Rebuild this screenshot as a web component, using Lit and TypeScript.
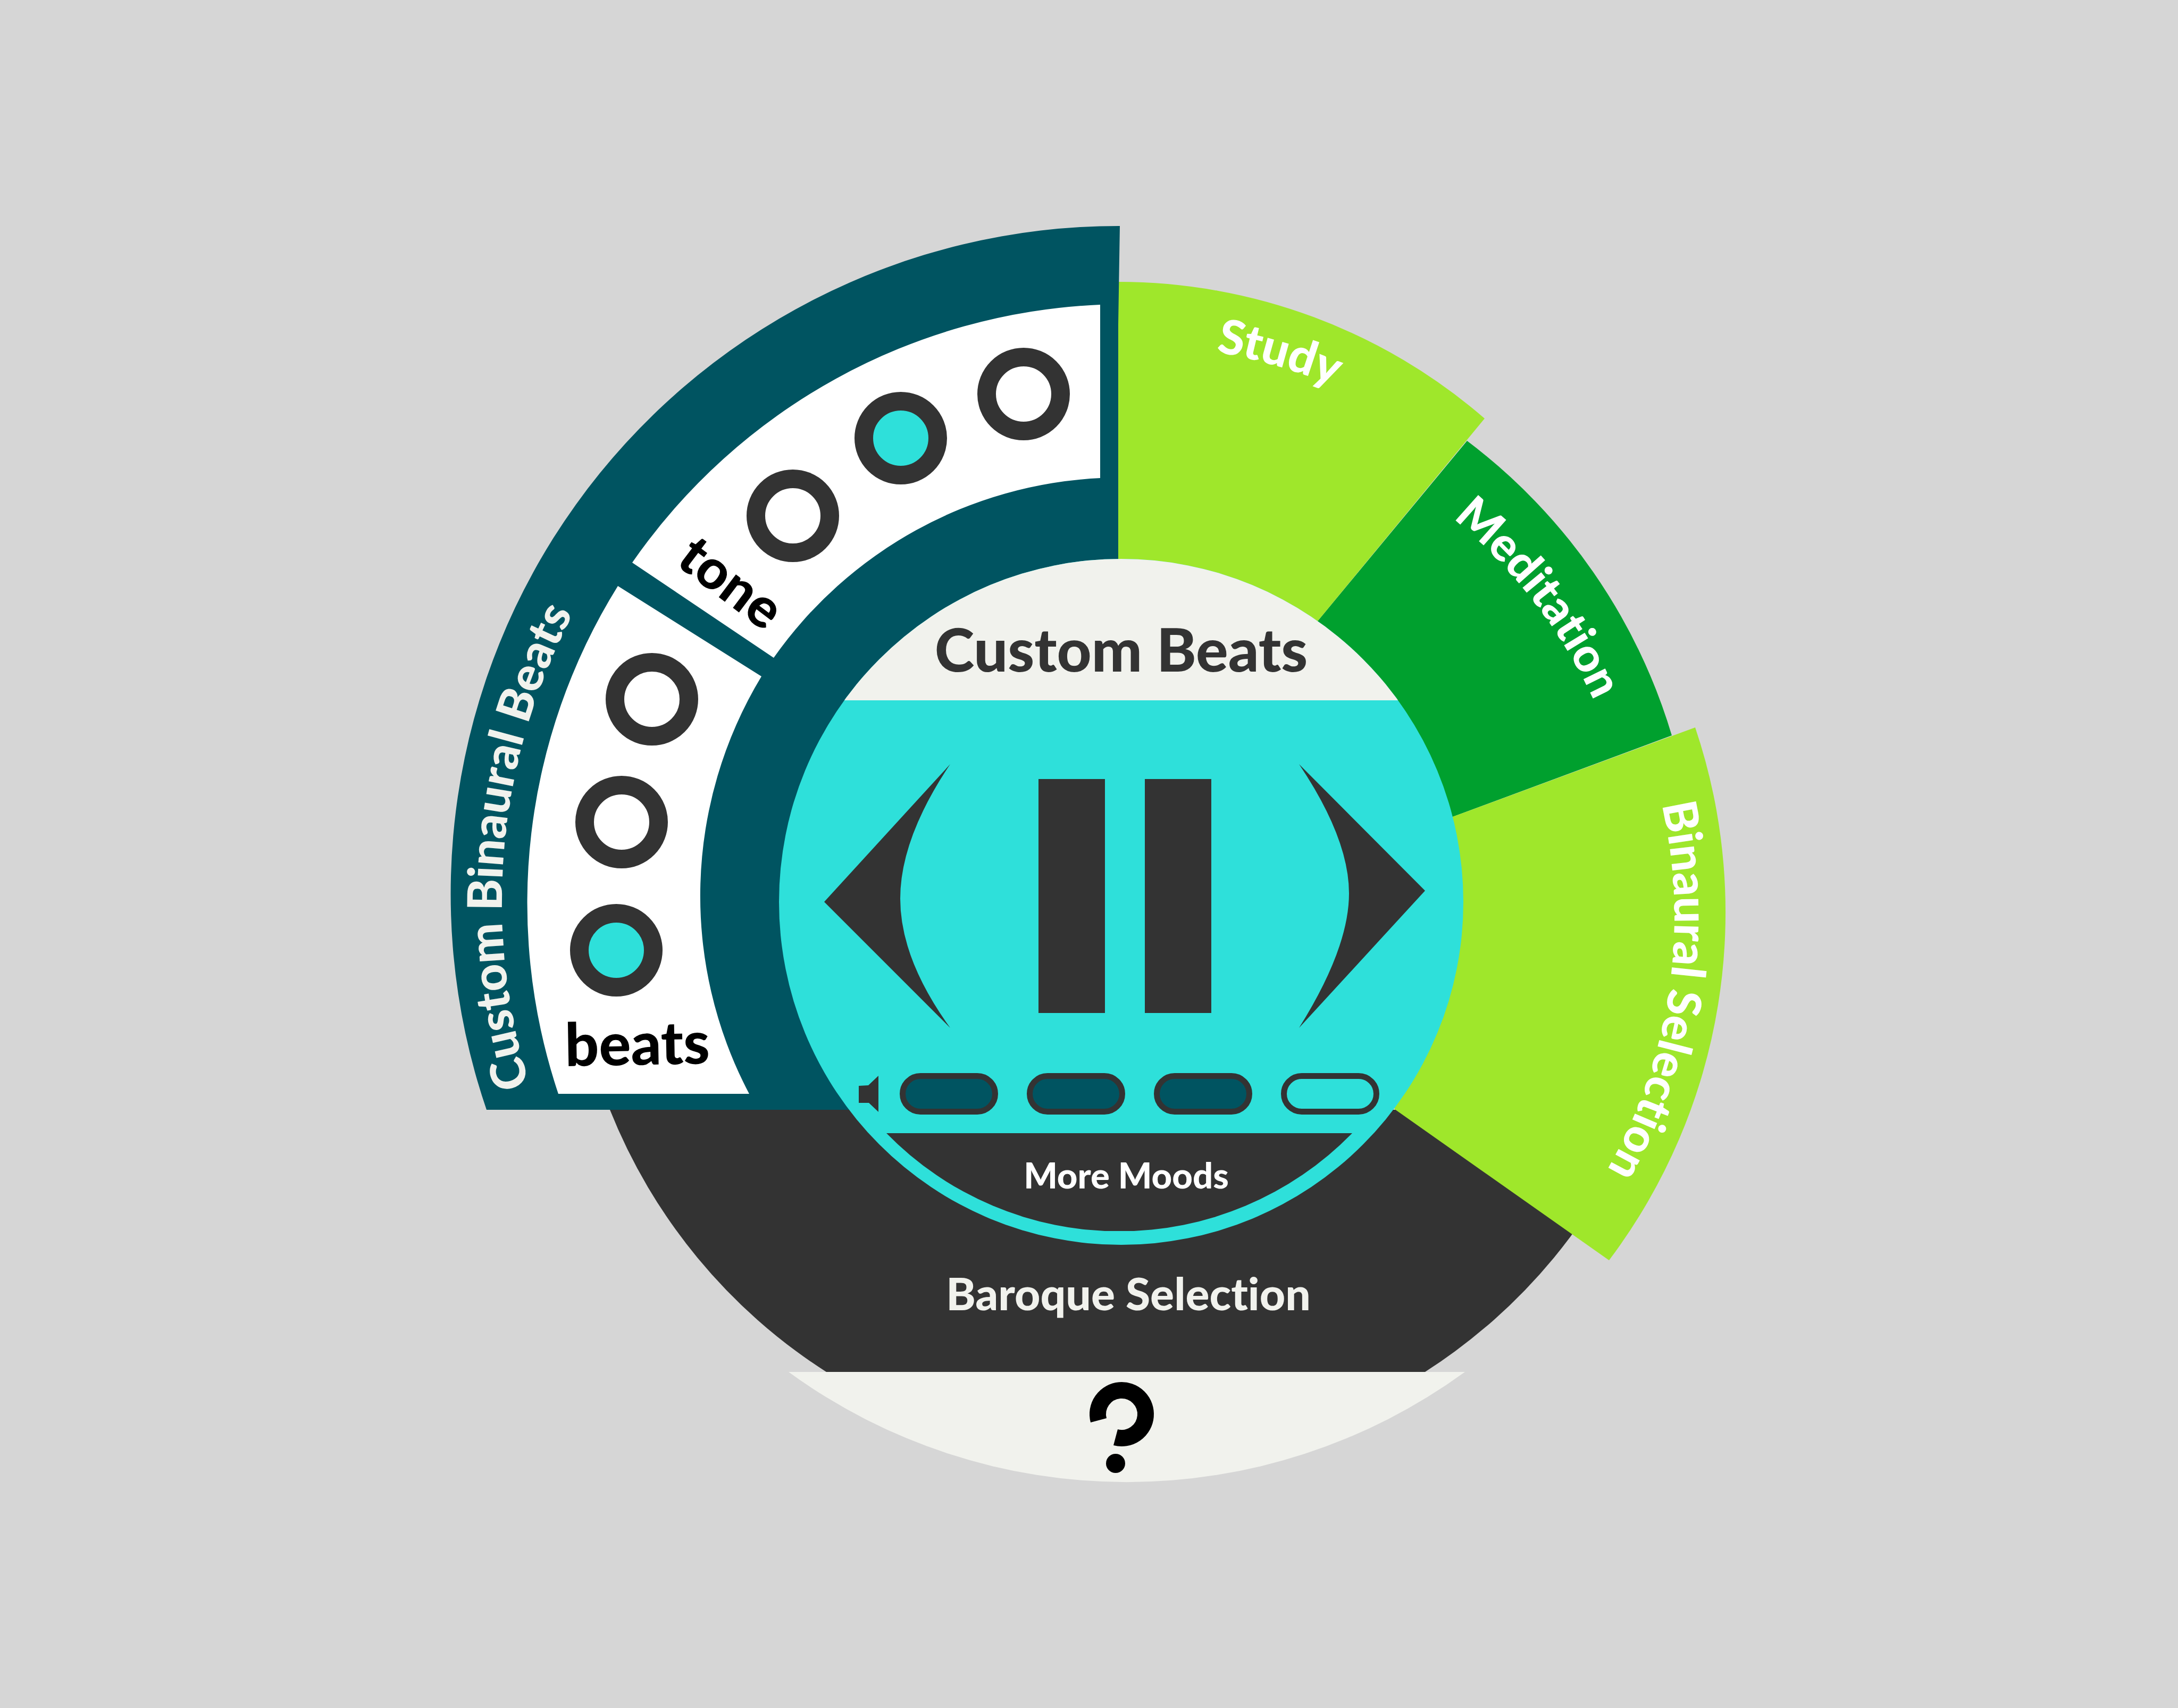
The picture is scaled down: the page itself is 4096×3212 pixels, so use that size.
import { LitElement, html, svg, css } from "lit";
import { customElement, state } from "lit/decorators.js";
import { classMap } from "lit/directives/class-map.js";

interface Dot {
  x: number;
  y: number;
}

const TONES: Dot[] = [
  { x: 1491, y: 970 },
  { x: 1694, y: 824 },
  { x: 1925, y: 741 },
];

const BEATS: Dot[] = [
  { x: 1226, y: 1315 },
  { x: 1169, y: 1546 },
  { x: 1159, y: 1787 },
];

const LEVELS = [1, 2, 3, 4];
const DOT = 174;

@customElement("mood-player")
export class MoodPlayer extends LitElement {
  static styles = css`
    :host {
      display: block;
      height: 100%;
    }
    button {
      margin: 0;
      padding: 0;
      border: 0;
      background: none;
      font: inherit;
      color: inherit;
      cursor: pointer;
    }
    svg {
      display: block;
      fill: #333333;
    }
    .disc {
      box-sizing: border-box;
      display: flex;
      flex-direction: column;
      height: 100%;
      border-radius: 50%;
      overflow: hidden;
      background: #2ee0da;
      color: #333333;
      font-family: Lato, "Open Sans", sans-serif;
    }
    .title {
      box-sizing: border-box;
      height: 266px;
      margin: 0;
      padding-top: 101px;
      background: #f1f2ed;
      font-size: 113px;
      line-height: 134px;
      font-weight: 900;
      text-align: center;
    }
    .transport {
      display: flex;
      align-items: center;
      justify-content: space-between;
      margin-top: 120px;
      padding: 0 72px 0 85px;
    }
    .volume {
      display: flex;
      align-items: center;
      gap: 54px;
      margin-top: 85px;
      padding-left: 150px;
    }
    .speaker {
      margin-right: -14px;
    }
    .level {
      box-sizing: border-box;
      width: 185px;
      height: 78px;
      border: 11px solid #333333;
      border-radius: 40px;
    }
    .level.on {
      background: #005461;
    }
    .more {
      box-sizing: border-box;
      width: 876px;
      height: 184px;
      margin: 35px 0 0 202px;
      padding: 0 0 28px 26px;
      flex: none;
      background: #333333;
      color: #ffffff;
      clip-path: path("M0 0H876A612 612 0 0 1 0 0Z");
      font-size: 67px;
      line-height: 80px;
      font-weight: 900;
    }
  `;

  @state() private level = 3;

  render() {
    return html`
      <section class="disc">
        <h1 class="title">Custom Beats</h1>
        <div class="transport">
          <button aria-label="Previous">
            <svg width="238" height="496" viewBox="0 0 238 496">
              <path d="M237 0Q143 140 143 253T237 496L0 259Z" />
            </svg>
          </button>
          <button aria-label="Pause">
            <svg width="325" height="440" viewBox="0 0 325 440">
              <rect width="125" height="440" />
              <rect x="200" width="125" height="440" />
            </svg>
          </button>
          <button aria-label="Next">
            <svg width="238" height="496" viewBox="0 0 238 496">
              <path d="M1 0Q95 140 95 243T1 496L238 238Z" />
            </svg>
          </button>
        </div>
        <div class="volume">
          <svg class="speaker" width="37" height="68" viewBox="0 0 37 68">
            <path d="M0 19L18 18L37 0V68L19 51H0Z" />
          </svg>
          ${LEVELS.map(
            (n) => html`<button
              class=${classMap({ level: true, on: n <= this.level })}
              aria-label="Volume ${n}"
              @click=${() => (this.level = n)}
            ></button>`
          )}
        </div>
        <button class="more">More Moods</button>
      </section>
    `;
  }
}

@customElement("app-root")
export class AppRoot extends LitElement {
  static styles = css`
    :host {
      display: block;
      min-height: 100vh;
      background: #d6d6d6;
    }
    .stage {
      display: block;
      width: 100%;
      height: auto;
      font-family: Lato, "Open Sans", sans-serif;
      font-weight: 900;
      font-variant-ligatures: none;
    }
    a {
      text-decoration: none;
      cursor: pointer;
    }
    .teal {
      fill: #005461;
    }
    .lime {
      fill: #9fe72b;
    }
    .green {
      fill: #00a02e;
    }
    .dark {
      fill: #333333;
    }
    .white {
      fill: #ffffff;
    }
    .paper {
      fill: #f1f2ed;
    }
    .guide {
      fill: none;
    }
    .small {
      font-size: 84px;
    }
    .medium {
      font-size: 88px;
    }
    .large {
      font-size: 90px;
    }
    .tone {
      font-size: 104px;
    }
    .beats {
      font-size: 112px;
    }
    .hook {
      fill: none;
      stroke: #000000;
      stroke-width: 31;
    }
    .dot {
      appearance: none;
      box-sizing: border-box;
      display: block;
      width: 174px;
      height: 174px;
      margin: 0;
      border: 35px solid #333333;
      border-radius: 50%;
      background: #ffffff;
      cursor: pointer;
    }
    .dot:checked {
      background: #2ee0da;
    }
  `;

  private dots(name: string, items: Dot[], selected: number) {
    return items.map(
      (d, i) => svg`
        <foreignObject x=${d.x - DOT / 2} y=${d.y - DOT / 2} width=${DOT} height=${DOT}>
          ${html`<input
            class="dot"
            type="radio"
            name=${name}
            aria-label="${name} ${i + 1}"
            .checked=${i === selected}
          />`}
        </foreignObject>`
    );
  }

  render() {
    return html`
      <svg class="stage" viewBox="0 0 4096 3212">
        <defs>
          <path id="custom-line" class="guide" d="M996 2040A1165 1165 0 0 1 1186 985" />
          <path id="study-line" class="guide" d="M2287 662A1053 1053 0 0 1 2635 788" />
          <path id="meditation-line" class="guide" d="M2732 975A962 962 0 0 1 3024 1381" />
          <path id="binaural-line" class="guide" d="M3125 1513A955 955 0 0 1 2976 2273" />
        </defs>

        <a href="#baroque">
          <path class="dark" d="M1147 2087A1044 1044 0 0 0 1554 2580H2680A1044 1044 0 0 0 3087 2087Z" />
          <text class="paper small" x="2122" y="2464" text-anchor="middle">Baroque Selection</text>
        </a>

        <a href="#help" aria-label="Help">
          <path class="paper" d="M1483 2580H2755A1080 1080 0 0 1 1483 2580Z" />
          <path class="hook" d="M2066 2671A45 45 0 1 1 2098 2703" />
          <circle cx="2098" cy="2752" r="18" />
        </a>

        <a href="#meditation">
          <path class="green" d="M2759 829A1080 1080 0 0 1 3144 1383L2732 1536L2400 1400L2478 1168Z" />
          <text class="white medium"><textPath href="#meditation-line">Meditation</textPath></text>
        </a>

        <a href="#study">
          <path class="lime" d="M2103 530A1052 1052 0 0 1 2792 787L2478 1168L2300 1384H2103Z" />
          <text class="white large"><textPath href="#study-line">Study</textPath></text>
        </a>

        <a href="#binaural">
          <path class="lime" d="M3188 1368A1087 1087 0 0 1 3026 2370L2623 2086L2500 1700L2732 1536Z" />
          <text class="white medium"><textPath href="#binaural-line">Binaural Selection</textPath></text>
        </a>

        <a href="#custom">
          <path class="teal" d="M2106 425A1256 1256 0 0 0 915 2087H2103V610Z" />
          <text class="paper large"><textPath href="#custom-line">Custom Binaural Beats</textPath></text>
        </a>

        <path class="white" d="M2069 573A1129 1129 0 0 0 1189 1058L1455 1237A798 798 0 0 1 2069 899Z" />
        <text class="tone" transform="translate(1268 1060) rotate(37)">tone</text>
        ${this.dots("tone", TONES, 1)}

        <path class="white" d="M1162 1102A1129 1129 0 0 0 1050 2057H1409A798 798 0 0 1 1432 1272Z" />
        <text class="beats" transform="translate(1063 2005) rotate(-1)">beats</text>
        ${this.dots("beats", BEATS, 2)}

        <foreignObject x="1465" y="1051" width="1287" height="1290">
          ${html`<mood-player></mood-player>`}
        </foreignObject>
      </svg>
    `;
  }
}
